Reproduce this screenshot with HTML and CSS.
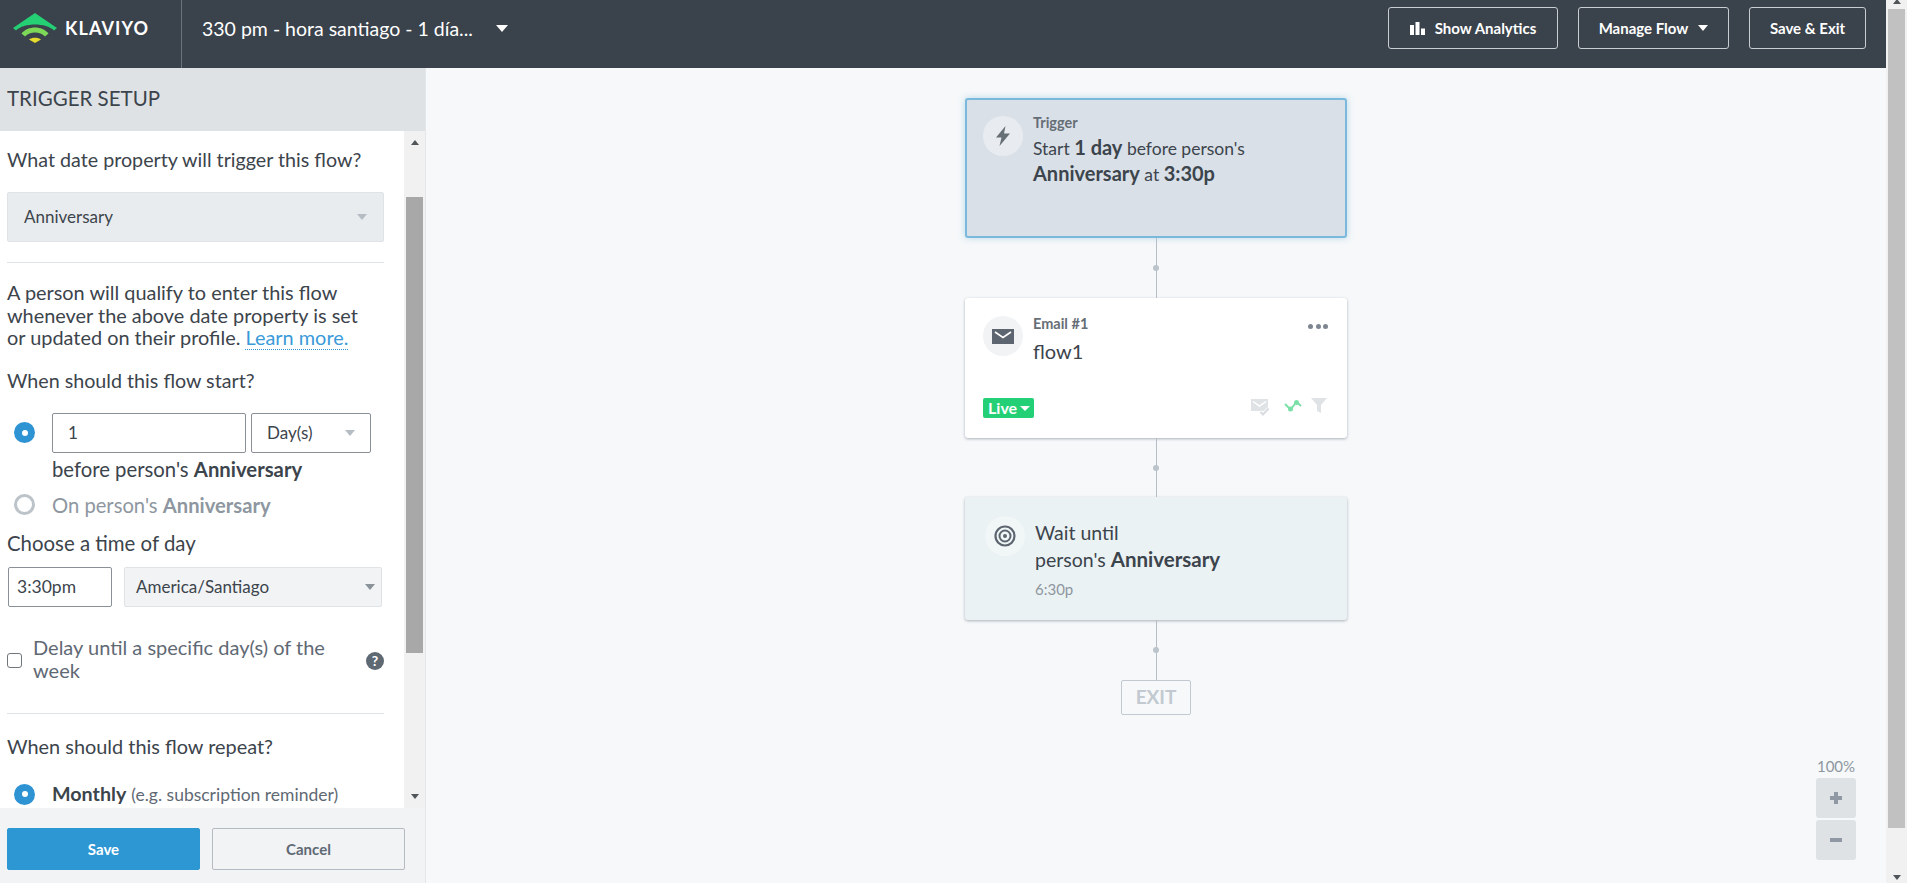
FILE: index.html
```html
<!DOCTYPE html>
<html lang="en">
<head>
<meta charset="utf-8">
<title>Flow</title>
<link rel="stylesheet" href="styles.css">
</head>
<body>
<div class="app">
  <header class="topbar">
    <div class="brand">
      <svg class="logo-mark" viewBox="13 13 44 30" width="44" height="30"><path d="M35 13 L57 28 L54 30.500 C46 22.500 24 22.500 16 30.500 L13 28 Z" fill="#25cf74"/><path d="M21.500 33.500 C28 25.500 42 25.500 48.500 33.500 L45 36.500 C40 31 30 31 25 36.500 Z" fill="#7ed858"/><path d="M29 39.500 C32 37 38 37 41 39.500 L35 43 Z" fill="#e6dc2e"/></svg>
      <span class="logo-text">KLAVIYO</span>
    </div>
    <div class="flow-name"><span>330 pm - hora santiago - 1 día...</span><i class="caret-white big"></i></div>
    <div class="actions">
      <button class="top-btn analytics"><svg viewBox="0 0 15 13" width="15" height="13"><path d="M0 3h4v10H0zM5.500 0h4v13h-4zM11 6.500h4V13h-4z" fill="#fff"/></svg>Show Analytics</button>
      <button class="top-btn manage">Manage Flow<i class="caret-white"></i></button>
      <button class="top-btn exit-btn">Save &amp; Exit</button>
    </div>
  </header>
  <div class="main">
    <aside class="sidebar">
      <h2 class="side-title">TRIGGER SETUP</h2>
      <div class="side-scroll">
        <div class="side-body">
          <p class="q">What date property will trigger this flow?</p>
          <div class="select wide"><span>Anniversary</span><i class="caret-grey"></i></div>
          <hr>
          <p class="info">A person will qualify to enter this flow<br>whenever the above date property is set<br>or updated on their profile. <a>Learn more.</a></p>
          <p class="q when">When should this flow start?</p>
          <div class="radio-row">
            <span class="radio on"></span>
            <span class="input n">1</span>
            <span class="select-w">Day(s)<i class="caret-grey"></i></span>
          </div>
          <p class="q before">before person's <b>Anniversary</b></p>
          <div class="radio-row2"><span class="radio"></span><span class="muted">On person's <b>Anniversary</b></span></div>
          <p class="q tod">Choose a time of day</p>
          <div class="time-row"><span class="input t">3:30pm</span><span class="select tz">America/Santiago<i class="caret-grey dark"></i></span></div>
          <div class="delay"><span class="check"></span><span class="delay-text">Delay until a specific day(s) of the<br>week</span><span class="help">?</span></div>
          <hr class="hr2">
          <p class="q rep">When should this flow repeat?</p>
          <div class="radio-row3"><span class="radio on"></span><span><b>Monthly</b> <small>(e.g. subscription reminder)</small></span></div>
        </div>
        <div class="scrollbar"><i class="up"></i><span class="thumb"></span><i class="down"></i></div>
      </div>
      <div class="side-foot"><button class="save">Save</button><button class="cancel">Cancel</button></div>
    </aside>
    <section class="canvas">
      <div class="flow">
        <div class="card trigger">
          <span class="ic-circle"><svg viewBox="0 0 16 20" width="16" height="20"><path d="M10.500 0 L1 11.500 H6.500 L4.500 20 L15 7.500 H9 Z" fill="#666e76"/></svg></span>
          <div class="card-text"><span class="label">Trigger</span><p>Start <b>1 day</b> before person's<br><b>Anniversary</b> at <b>3:30p</b></p></div>
        </div>
        <div class="conn c1"><i></i></div>
        <div class="card email">
          <div class="card-top">
            <span class="ic-circle"><svg viewBox="0 0 22 15" width="22" height="15"><path d="M0 0h22v15H0z" fill="#5d6670"/><path d="M3 3l8 5.500 8-5.500" fill="none" stroke="#fff" stroke-width="1.600"/></svg></span>
            <div class="card-text"><span class="label">Email #1</span><p>flow1</p></div>
            <span class="dots"><i></i><i></i><i></i></span>
          </div>
          <div class="email-foot">
            <span class="live"><span class="live-text">Live</span><i class="caret-white tiny"></i></span>
            <span class="mini-icons">
              <svg class="mi-mail" viewBox="0 0 19 19" width="19" height="19"><path d="M0 1h17v12H0z" fill="#e0e3e6"/><path d="M2 3.500l6.500 4.500 6.500-4.500" fill="none" stroke="#fff" stroke-width="1.500"/><path d="M8.500 14l3.500 3.500 6-6.500" fill="none" stroke="#fff" stroke-width="5"/><path d="M9.500 14l2.500 2.500 5.500-6" fill="none" stroke="#d9dde1" stroke-width="2.200"/></svg>
              <svg class="mi-wave" viewBox="0 0 18 12" width="18" height="12"><path d="M1 4 L6.500 9.500 L12.500 2 L17 6" fill="none" stroke="#7be0a8" stroke-width="2"/><circle cx="6.500" cy="9" r="2.500" fill="#7be0a8"/><circle cx="12.500" cy="2.500" r="2.500" fill="#7be0a8"/></svg>
              <svg viewBox="0 0 16 15" width="16" height="15"><path d="M0 0h16l-6 7v8l-4-2V7z" fill="#e0e3e6"/></svg>
            </span>
          </div>
        </div>
        <div class="conn c2"><i></i></div>
        <div class="card wait">
          <span class="ic-circle"><svg viewBox="0 0 22 22" width="22" height="22"><circle cx="11" cy="11" r="9.500" fill="none" stroke="#5d6670" stroke-width="2.200"/><circle cx="11" cy="11" r="5.500" fill="none" stroke="#5d6670" stroke-width="2"/><circle cx="11" cy="11" r="2" fill="#5d6670"/></svg></span>
          <div class="card-text"><p>Wait until<br>person's <b>Anniversary</b></p><span class="time">6:30p</span></div>
        </div>
        <div class="conn c3"><i></i></div>
        <div class="exit">EXIT</div>
      </div>
      <div class="zoom">
        <span class="zoom-pct">100%</span>
        <button class="zoom-btn"><svg viewBox="0 0 12 12" width="12" height="12"><path d="M4 0h4v4h4v4H8v4H4V8H0V4h4z" fill="#9098a3"/></svg></button>
        <button class="zoom-btn"><svg viewBox="0 0 12 4" width="12" height="4"><path d="M0 0h12v4H0z" fill="#9098a3"/></svg></button>
      </div>
    </section>
  </div>
</div>
<div class="page-scroll"><i class="up"></i><span class="page-thumb"></span><i class="down"></i></div>
</body>
</html>
```
FILE: styles.css
```css
* { box-sizing: border-box; }
html, body { margin: 0; height: 100%; overflow: hidden; }
body { width: 1907px; height: 883px; font-family: "Lato", "Liberation Sans", sans-serif; color: #3c444c; background: #f6f8fa; display: flex; }
p { margin: 0; }
button { font-family: inherit; cursor: pointer; }
.app { width: 1886px; flex: none; display: flex; flex-direction: column; }
.topbar { height: 68px; flex: none; background: #3a424b; display: flex; align-items: center; color: #fff; padding-right: 20px; }
.brand { width: 182px; height: 100%; flex: none; display: flex; align-items: center; gap: 8px; padding: 0 0 12px 13px; border-right: 1px solid #6a727a; }
.logo-text { font-family: "Lato", sans-serif; font-size: 18px; font-weight: 700; letter-spacing: 1.100px; }
.flow-name { display: flex; align-items: center; padding-left: 20px; margin-bottom: 12px; font-size: 19.500px; gap: 23px; }
.caret-white { display: inline-block; width: 0; height: 0; border-left: 5px solid transparent; border-right: 5px solid transparent; border-top: 6px solid #fff; }
.caret-white.big { border-left-width: 6px; border-right-width: 6px; border-top-width: 7px; }
.caret-white.tiny { border-left-width: 5px; border-right-width: 5px; border-top-width: 5px; margin-left: 3px; }
.actions { margin: 0 0 12px auto; display: flex; gap: 20px; }
.top-btn { height: 42px; display: flex; align-items: center; justify-content: center; gap: 10px; background: transparent; border: 1px solid #c9ced3; border-radius: 3px; color: #fff; font-size: 15px; font-weight: 700; padding: 0; }
.analytics { width: 170px; }
.manage { width: 151px; }
.exit-btn { width: 117px; }
.main { flex: 1; display: flex; min-height: 0; }
.sidebar { width: 426px; flex: none; display: flex; flex-direction: column; background: #fff; border-right: 1px solid #e4e7ea; }
.side-title { margin: 0; height: 63px; flex: none; background: #dfe2e5; font-size: 20.500px; font-weight: 400; padding-left: 7px; line-height: 60px; color: #3c444c; }
.side-scroll { flex: none; height: 677px; display: flex; overflow: hidden; }
.side-body { width: 404px; flex: none; padding: 17px 0 0 7px; font-size: 19.700px; }
.q { line-height: 24px; }
.select { background: #e9ecee; border: 1px solid #dfe3e6; border-radius: 2px; display: flex; align-items: center; justify-content: space-between; font-size: 17px; color: #3c444c; }
.wide { width: 377px; height: 50px; margin-top: 20px; padding: 0 16px; }
.wide span { margin-top: -2px; }
hr { width: 377px; margin: 20px 0 0; border: 0; border-top: 1px solid #dfe3e6; }
.info { margin-top: 18px; font-size: 19.900px; line-height: 22.500px; white-space: nowrap; }
.info a { color: #3a9ad9; border-bottom: 1px dotted #2d93d2; }
.when { margin-top: 20px; }
.caret-grey { display: inline-block; width: 0; height: 0; border-left: 5.500px solid transparent; border-right: 5.500px solid transparent; border-top: 6px solid #b5bcc4; }
.caret-grey.dark { border-top-color: #8a929a; }
.radio-row { display: flex; align-items: center; margin-top: 20px; }
.radio { width: 21px; height: 21px; flex: none; margin-left: 7px; border-radius: 50%; border: 3px solid #bcc3c9; background: #fff; display: inline-block; position: relative; }
.radio.on { border: 0; background: #2d93d2; }
.radio.on::after { content: ""; position: absolute; left: 7.500px; top: 7.500px; width: 6px; height: 6px; border-radius: 50%; background: #fff; }
.input { display: flex; align-items: center; border: 1px solid #8a9098; border-radius: 2px; background: #fff; font-size: 17px; }
.n { width: 194px; height: 40px; margin-left: 17px; padding-left: 15px; }
.select-w { width: 120px; height: 40px; margin-left: 5px; padding: 0 15px; border: 1px solid #8a9098; border-radius: 2px; display: flex; align-items: center; justify-content: space-between; font-size: 17px; }
.before { margin: 4px 0 0 45px; font-size: 20.300px; }
.radio-row2 { display: flex; align-items: center; gap: 17px; margin-top: 12px; line-height: 24px; font-size: 20.200px; }
.muted { color: #8e979f; }
.tod { margin-top: 14px; font-size: 20.400px; }
.time-row { display: flex; gap: 12px; margin-top: 12px; }
.t { width: 104px; height: 40px; padding-left: 8px; margin-left: 1px; font-size: 17.500px; }
.tz { width: 258px; height: 40px; padding: 0 6px 0 11px; background: #f1f3f5; }
.delay { display: flex; align-items: center; width: 377px; margin-top: 29px; font-size: 20px; }
.check { width: 15px; height: 15px; flex: none; margin-top: 4px; border: 1px solid #6f767c; border-radius: 3px; background: #fff; }
.delay-text { width: 333px; margin-left: 11px; line-height: 23px; color: #5f6974; }
.help { width: 18px; height: 18px; flex: none; margin-top: 4px; border-radius: 50%; background: #5f6974; color: #fff; font-size: 14px; font-weight: 700; display: flex; align-items: center; justify-content: center; }
.hr2 { margin-top: 31px; }
.rep { margin-top: 20px; font-size: 19.900px; }
.radio-row3 { display: flex; align-items: center; gap: 17px; margin-top: 24px; line-height: 24px; }
.radio-row3 small { font-size: 17.500px; color: #5f6974; }
.scrollbar { width: 21px; flex: none; background: #f1f1f1; display: flex; flex-direction: column; align-items: center; height: 677px; }
.thumb { width: 17px; height: 456px; margin-top: 52px; background: #a8a8a8; flex: none; }
.up, .down { display: block; flex: none; width: 0; height: 0; border-left: 4.500px solid transparent; border-right: 4.500px solid transparent; }
.up { border-bottom: 5px solid #50555a; margin-top: 9px; }
.down { border-top: 5px solid #50555a; margin-top: 141px; }
.side-foot { flex: 1; display: flex; gap: 12px; padding: 20px 0 0 7px; background: #f1f3f5; }
.save, .cancel { width: 193px; height: 42px; font-size: 15px; font-weight: 700; border-radius: 2px; }
.save { background: #2d97d4; border: 1px solid #2d97d4; color: #fff; }
.cancel { background: #f1f3f5; border: 1px solid #b3bac2; color: #5f6974; }
.canvas { flex: 1; position: relative; display: flex; justify-content: center; padding-top: 30px; }
.flow { width: 382px; display: flex; flex-direction: column; align-items: center; }
.card { width: 382px; flex: none; display: flex; border-radius: 3px; box-shadow: 0 1px 3px rgba(60,70,85,.4); padding: 18px; font-size: 17.500px; }
.trigger { height: 140px; background: #d9e0e8; border: 2px solid #7ab9dc; padding: 16px; box-shadow: 0 0 6px rgba(122,185,220,.5); }
.email { height: 140px; background: #fff; flex-direction: column; padding: 18px 19px 20px 18px; }
.card-top { display: flex; }
.wait { height: 123px; background: #ebf2f4; padding: 19px 20px; }
.ic-circle { width: 40px; height: 40px; flex: none; border-radius: 50%; background: #e8ebef; display: flex; align-items: center; justify-content: center; }
.email .ic-circle { background: #f1f3f5; }
.wait .ic-circle { background: #f1f6f7; }
.card-text { margin-left: 10px; line-height: 25px; }
.card-text b { font-size: 20px; font-weight: 700; }
.label { display: block; font-size: 14.500px; font-weight: 700; line-height: 14px; color: #666e76; }
.trigger .card-text p { margin-top: 5px; }
.email .label { line-height: 16px; }
.email .card-text p { margin-top: 7px; font-size: 20px; }
.wait .card-text { font-size: 19.500px; line-height: 27px; }
.wait .card-text b { font-size: 20.500px; }
.wait .card-text p { margin-top: 3px; }
.time { display: block; margin-top: 7px; font-size: 15px; line-height: 18px; color: #8e979f; }
.dots { margin: 8px 0 0 auto; display: flex; gap: 2.500px; height: 5px; }
.dots i { width: 5px; height: 5px; border-radius: 50%; background: #7d8690; }
.email-foot { margin-top: auto; display: flex; justify-content: space-between; align-items: flex-start; }
.live { height: 20px; width: 51px; padding-left: 5px; background: #23d076; color: #fff; font-size: 16px; font-weight: 700; display: flex; align-items: center; border-radius: 2px; }
.live-text { margin-top: -2px; }
.mini-icons { display: flex; align-items: flex-start; margin-right: 1px; }
.mi-mail { margin-right: 14px; }
.mi-wave { margin: 2px 9px 0 0; }
.conn { width: 1px; background: #b5bec6; position: relative; flex: none; }
.c1 { height: 60px; }
.c2 { height: 59px; }
.c3 { height: 60px; }
.conn i { position: absolute; left: -3px; top: 50%; margin-top: -3px; width: 6px; height: 6px; border-radius: 50%; background: #bcc4cb; }
.exit { width: 70px; height: 35px; padding-bottom: 2px; border: 1px solid #c2c9d0; border-radius: 2px; display: flex; align-items: center; justify-content: center; font-size: 19px; font-weight: 700; color: #c2c9d0; }
.zoom { position: absolute; right: 30px; bottom: 23px; width: 40px; display: flex; flex-direction: column; align-items: center; gap: 2px; }
.zoom-pct { font-size: 15px; line-height: 16px; color: #8e979f; margin-bottom: 2px; }
.zoom-btn { width: 40px; height: 40px; background: #dfe2e5; border: 0; border-radius: 3px; padding: 0; display: flex; align-items: center; justify-content: center; }
.page-scroll { width: 21px; flex: none; background: #f1f1f1; display: flex; flex-direction: column; align-items: center; }
.page-scroll .up { margin-top: -1px; }
.page-thumb { width: 17px; height: 819px; margin-top: 5px; background: #c1c1c1; flex: none; }
.page-scroll .down { margin-top: 47px; }
```
